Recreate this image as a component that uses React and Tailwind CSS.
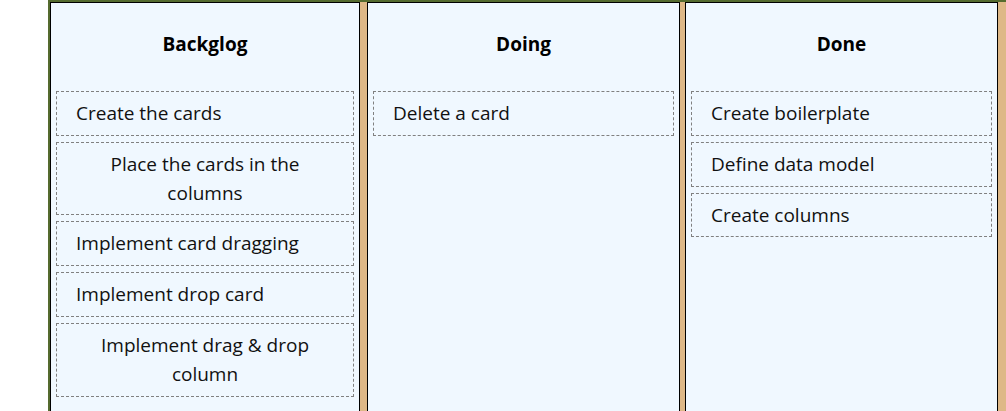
const columns = [
  {
    title: "Backglog",
    w: "w-[310px]",
    cards: [
      "Create the cards",
      "Place the cards in the columns",
      "Implement card dragging",
      "Implement drop card",
      "Implement drag & drop column",
    ],
  },
  { title: "Doing", w: "w-[313px]", cards: ["Delete a card"] },
  {
    title: "Done",
    w: "w-[313px]",
    cards: ["Create boilerplate", "Define data model", "Create columns"],
  },
];

function Card({ text }) {
  return (
    <div className="flex items-center text-center border border-dashed border-[#808080] mx-[5px] mb-[6px] px-[19px] py-[7px] text-[19px] leading-[28.8px] text-[#111]">
      {text}
    </div>
  );
}

function Column({ col }) {
  return (
    <div className={`${col.w} shrink-0 h-[520px] border border-black bg-[#f0f8ff]`}>
      <div className="h-[88px] pb-[6px] flex items-center justify-center font-bold text-[19px] text-black">
        {col.title}
      </div>
      {col.cards.map((c) => (
        <Card key={c} text={c} />
      ))}
    </div>
  );
}

export default function App() {
  return (
    <div
      className="w-[1006px] h-[411px] overflow-hidden bg-white pl-[48px]"
      style={{ fontFamily: '"Open Sans", "Noto Sans", sans-serif' }}
    >
      <div className="flex w-[1100px] h-[600px] border-l-2 border-t-2 border-[#556b2f] bg-[#deb887]">
        <Column col={columns[0]} />
        <div className="w-[7px] shrink-0" />
        <Column col={columns[1]} />
        <div className="w-[5px] shrink-0" />
        <Column col={columns[2]} />
      </div>
    </div>
  );
}
